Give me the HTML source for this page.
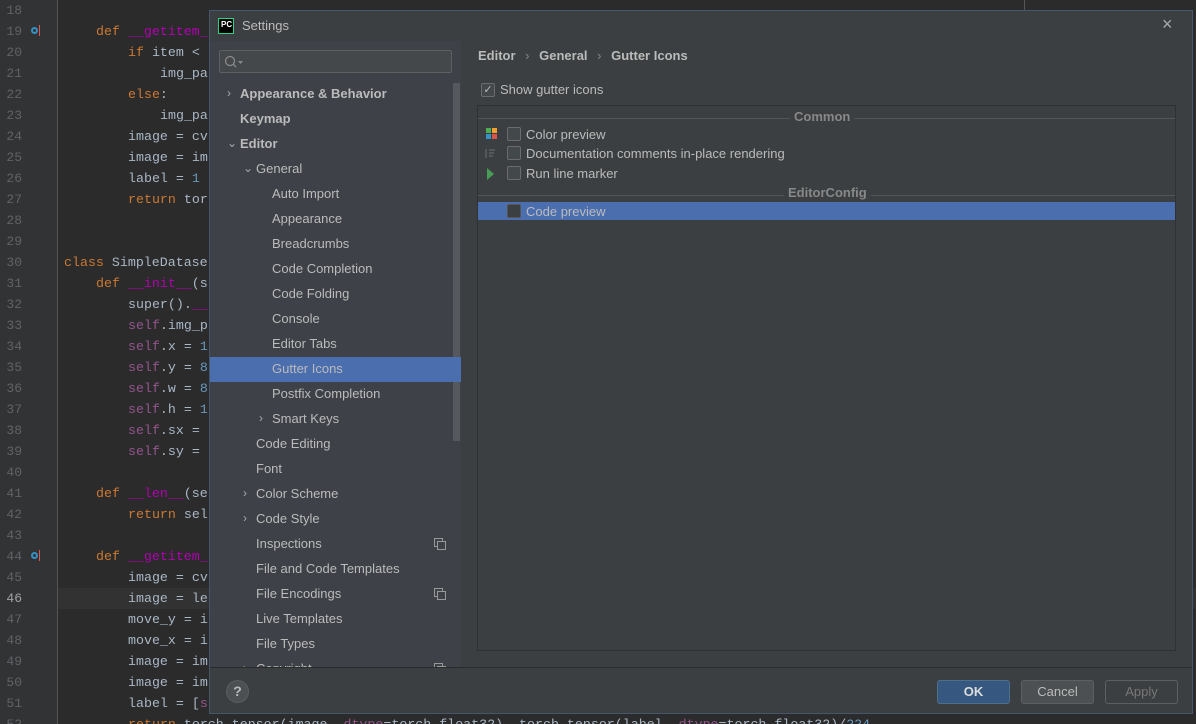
<!DOCTYPE html>
<html style="width:1196px;height:724px;overflow:hidden"><head><meta charset="utf-8"><style>
*{margin:0;padding:0;box-sizing:border-box}
body{width:1196px;height:724px;overflow:hidden;background:#2b2b2b;position:relative;font-family:"Liberation Sans",sans-serif}
.ab{position:absolute}
.gut{left:0;top:0;width:58px;height:724px;background:#313335}
.ln{position:absolute;left:0;width:22px;text-align:right;font:13px "Liberation Mono",monospace;color:#606366;line-height:21px}
.cd{position:absolute;font:13.3px "Liberation Mono",monospace;color:#a9b7c6;line-height:21px;white-space:pre}
.k{color:#cc7832}.f{color:#b200b2}.s{color:#94558d}.n{color:#6897bb}
.dlg{left:209px;top:10px;width:984px;height:704px;background:#3c3f41;border:1px solid #44566c}
.tree{left:0;top:30px;width:251px;height:627px;background:#3e4147;overflow:hidden}
.ti{position:absolute;font-size:13px;color:#bbbbbb;line-height:25px;height:25px;white-space:nowrap}
.b{font-weight:bold}
.arr{position:absolute;font-size:12px;color:#aaa}
.cb{position:absolute;width:14px;height:14px;border:1px solid #6b6b6b;border-radius:2px;background:#43494a}
.rt{position:absolute;font-size:13px;color:#bbbbbb;white-space:nowrap}
.btn{position:absolute;top:669px;width:73px;height:24px;border:1px solid #5e6060;border-radius:3px;font-size:13px;text-align:center;line-height:22px;color:#bbb;background:#4c5052}
.cp{position:absolute;width:9px;height:9px;border:1px solid #999}
</style></head><body>
<div class="ab gut"></div>
<div class="ab" style="left:57px;top:0;width:1px;height:724px;background:#555"></div>
<div class="ab" style="left:58px;top:588px;width:1138px;height:21px;background:#323232"></div>
<div class="ab" style="left:1024px;top:0;width:1px;height:10px;background:#555"></div>
<div id="lns"></div>
<div class="cd" style="left:96px;top:21px"><span class="k">def</span> <span class="f">__getitem_</span></div>
<div class="cd" style="left:128px;top:42px"><span class="k">if</span> item &lt;</div>
<div class="cd" style="left:160px;top:63px">img_pa</div>
<div class="cd" style="left:128px;top:84px"><span class="k">else</span>:</div>
<div class="cd" style="left:160px;top:105px">img_pa</div>
<div class="cd" style="left:128px;top:126px">image = cv</div>
<div class="cd" style="left:128px;top:147px">image = im</div>
<div class="cd" style="left:128px;top:168px">label = <span class="n">1</span></div>
<div class="cd" style="left:128px;top:189px"><span class="k">return</span> tor</div>
<div class="cd" style="left:64px;top:252px"><span class="k">class</span> SimpleDatase</div>
<div class="cd" style="left:96px;top:273px"><span class="k">def</span> <span class="f">__init__</span>(s</div>
<div class="cd" style="left:128px;top:294px">super().<span class="f">__</span></div>
<div class="cd" style="left:128px;top:315px"><span class="s">self</span>.img_p</div>
<div class="cd" style="left:128px;top:336px"><span class="s">self</span>.x = <span class="n">1</span></div>
<div class="cd" style="left:128px;top:357px"><span class="s">self</span>.y = <span class="n">8</span></div>
<div class="cd" style="left:128px;top:378px"><span class="s">self</span>.w = <span class="n">8</span></div>
<div class="cd" style="left:128px;top:399px"><span class="s">self</span>.h = <span class="n">1</span></div>
<div class="cd" style="left:128px;top:420px"><span class="s">self</span>.sx =</div>
<div class="cd" style="left:128px;top:441px"><span class="s">self</span>.sy =</div>
<div class="cd" style="left:96px;top:483px"><span class="k">def</span> <span class="f">__len__</span>(se</div>
<div class="cd" style="left:128px;top:504px"><span class="k">return</span> sel</div>
<div class="cd" style="left:96px;top:546px"><span class="k">def</span> <span class="f">__getitem_</span></div>
<div class="cd" style="left:128px;top:567px">image = cv</div>
<div class="cd" style="left:128px;top:588px">image = le</div>
<div class="cd" style="left:128px;top:609px">move_y = i</div>
<div class="cd" style="left:128px;top:630px">move_x = i</div>
<div class="cd" style="left:128px;top:651px">image = im</div>
<div class="cd" style="left:128px;top:672px">image = im</div>
<div class="cd" style="left:128px;top:693px">label = [<span class="s">s</span></div>
<div class="cd" style="left:128px;top:714px"><span class="k">return</span> torch.tensor(image, <span class="s">dtype</span>=torch.float32), torch.tensor(label, <span class="s">dtype</span>=torch.float32)/<span class="n">224</span></div>
<div class="ab" style="left:31px;top:27px;width:7px;height:7px;border-radius:50%;border:2px solid #3592c4"></div>
<div class="ab" style="left:39px;top:25px;width:1px;height:11px;background:#e05555"></div>
<div class="ab" style="left:31px;top:552px;width:7px;height:7px;border-radius:50%;border:2px solid #3592c4"></div>
<div class="ab" style="left:39px;top:550px;width:1px;height:11px;background:#e05555"></div>

<div class="ab dlg">
 <div class="ab" style="left:8px;top:7px;width:16px;height:16px;background:#000;border:1px solid #21d789;color:#fff;font:bold 8px 'Liberation Sans';padding:1px 0 0 2px">PC</div>
 <div class="ab" style="left:32px;top:7px;font-size:13px;color:#bbb">Settings</div>
 <div class="ab" style="left:952px;top:3px;font-size:18px;color:#aaa">×</div>
 <div class="ab tree">
  <div class="ab" style="left:9px;top:9px;width:233px;height:23px;background:#45484a;border:1px solid #5e6060;border-radius:2px"></div>
  <svg class="ab" style="left:14px;top:14px" width="20" height="14"><circle cx="6" cy="6" r="4.5" fill="none" stroke="#888" stroke-width="1.3"/><line x1="9" y1="9" x2="12" y2="12" stroke="#888" stroke-width="1.3"/><path d="M14 6 h5 l-2.5 3z" fill="#888"/></svg>
  <div class="ab" style="left:243px;top:42px;width:7px;height:358px;background:#55585c"></div>
  <div class="ab" style="left:0;top:316px;width:251px;height:25px;background:#4b6eaf"></div>
  <div id="tree"></div>
 </div>
 <div class="ab" style="left:0;top:656px;width:982px;height:1px;background:#2b2b2b"></div>
 <div class="ab" style="left:16px;top:669px;width:23px;height:23px;border-radius:50%;background:#4c5052;border:1px solid #5a5d60;color:#bbb;font:bold 14px 'Liberation Sans';text-align:center;line-height:21px">?</div>
 <div class="rt b" style="left:268px;top:37px">Editor <span style="font-weight:normal;color:#888;margin:0 6px">›</span> General <span style="font-weight:normal;color:#888;margin:0 6px">›</span> Gutter Icons</div>
 <div class="cb" style="left:271px;top:72px;font-size:11px;color:#bbb;line-height:12px;text-align:center">✓</div>
 <div class="rt" style="left:290px;top:71px">Show gutter icons</div>
 <div class="ab" style="left:267px;top:94px;width:699px;height:546px;border:1px solid #2f3133"></div>
 <div class="ab" style="left:268px;top:107px;width:697px;height:1px;background:#555"></div>
 <div class="rt b" style="left:580px;top:98px;background:#3c3f41;color:#888;padding:0 4px">Common</div>
 <div class="ab" style="left:276px;top:117px;width:5px;height:5px;background:#4caf50"></div><div class="ab" style="left:282px;top:117px;width:5px;height:5px;background:#f0a030"></div>
 <div class="ab" style="left:276px;top:123px;width:5px;height:5px;background:#3592c4"></div><div class="ab" style="left:282px;top:123px;width:5px;height:5px;background:#d9534f"></div>
 <div class="cb" style="left:297px;top:116px"></div><div class="rt" style="left:316px;top:116px">Color preview</div>
 <svg class="ab" style="left:275px;top:137px" width="12" height="12"><path d="M1 1v9M4 2h6M4 5h5M4 8h4" stroke="#666" stroke-width="1.2"/></svg>
 <div class="cb" style="left:297px;top:135px"></div><div class="rt" style="left:316px;top:135px">Documentation comments in-place rendering</div>
 <svg class="ab" style="left:277px;top:157px" width="8" height="12"><path d="M0 0 L7 6 L0 12z" fill="#499c54"/></svg>
 <div class="cb" style="left:297px;top:155px"></div><div class="rt" style="left:316px;top:155px">Run line marker</div>
 <div class="ab" style="left:268px;top:184px;width:697px;height:1px;background:#555"></div>
 <div class="rt b" style="left:574px;top:174px;background:#3c3f41;color:#888;padding:0 4px">EditorConfig</div>
 <div class="ab" style="left:268px;top:191px;width:697px;height:18px;background:#4b6eaf"></div>
 <div class="cb" style="left:297px;top:193px;background:#3c3f41;border-color:#555"></div><div class="rt" style="left:316px;top:193px">Code preview</div>
 <div class="btn b" style="left:727px;background:#365880;border-color:#4c708c;color:#ddd">OK</div>
 <div class="btn" style="left:811px">Cancel</div>
 <div class="btn" style="left:895px;background:#3c3f41;color:#777">Apply</div>
</div>
<script>
var h='';for(var n=18;n<=52;n++){h+='<div class="ln" style="top:'+((n-18)*21)+'px;'+(n==46?'color:#a4a3a3':'')+'">'+n+'</div>';}
document.getElementById('lns').innerHTML=h;
var t=[[16,'Appearance & Behavior',1,1],[16,'Keymap',1,0],[16,'Editor',1,2],[32,'General',0,2],[48,'Auto Import'],[48,'Appearance'],[48,'Breadcrumbs'],[48,'Code Completion'],[48,'Code Folding'],[48,'Console'],[48,'Editor Tabs'],[48,'Gutter Icons'],[48,'Postfix Completion'],[48,'Smart Keys',0,1],[32,'Code Editing'],[32,'Font'],[32,'Color Scheme',0,1],[32,'Code Style',0,1],[32,'Inspections',0,0,1],[32,'File and Code Templates'],[32,'File Encodings',0,0,1],[32,'Live Templates'],[32,'File Types'],[32,'Copyright',0,1,1]];
var s='';t.forEach(function(r,i){var y=40+i*25;s+='<div class="ti'+(r[2]?' b':'')+'" style="left:'+(r[0]+14)+'px;top:'+y+'px">'+r[1].replace('&','&amp;')+'</div>';
if(r[3])s+='<div class="arr" style="left:'+(r[0]+1)+'px;top:'+(y+5)+'px">'+(r[3]==1?'›':'⌄')+'</div>';
if(r[4])s+='<div class="cp" style="top:'+(y+7)+'px;left:224px"></div><div class="cp" style="top:'+(y+10)+'px;left:227px;background:#3e4147"></div>';});
document.getElementById('tree').innerHTML=s;
</script>
</body></html>
